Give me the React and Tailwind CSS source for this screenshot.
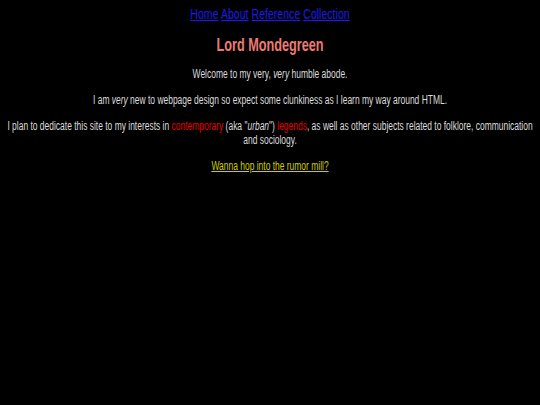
// The page's font is a narrow sans; none is installed, so Arial metrics are
// laid out on a wider canvas and squeezed horizontally to the 540px window.
export default function App() {
  return (
    <div className="min-h-[405px] overflow-hidden bg-black">
      <div
        className="w-[766px] origin-top-left scale-x-[0.705] text-center text-[12px] leading-[14px] text-[#dcdcdc]"
        style={{ fontFamily: '"Liberation Sans", Arial, sans-serif' }}
      >
        <nav className="pt-[6px] text-[15px] leading-[16px]">
          <a href="#" className="text-[#1a1aee] underline">Home</a>{' '}
          <a href="#" className="text-[#1a1aee] underline">About</a>{' '}
          <a href="#" className="text-[#1a1aee] underline">Reference</a>{' '}
          <a href="#" className="text-[#1a1aee] underline">Collection</a>
        </nav>
        <h1 className="mt-[12px] text-[18px] leading-[22px] font-bold text-[#ec7b76]">Lord Mondegreen</h1>
        <p className="mt-[11px]">
          Welcome to my very, <i>very</i> humble abode.
        </p>
        <p className="mt-[12px]">
          I am <i>very</i> new to webpage design so expect some clunkiness as I learn my way around HTML.
        </p>
        <p className="mt-[12px]">
          I plan to dedicate this site to my interests in{' '}
          <span className="text-[#e60000]">contemporary</span> (aka "<i>urban</i>"){' '}
          <span className="text-[#e60000]">legends</span>, as well as other subjects related to folklore,
          communication and sociology.
        </p>
        <p className="mt-[12px]">
          <a href="#" className="text-[#cccc00] underline">Wanna hop into the rumor mill?</a>
        </p>
      </div>
    </div>
  )
}
